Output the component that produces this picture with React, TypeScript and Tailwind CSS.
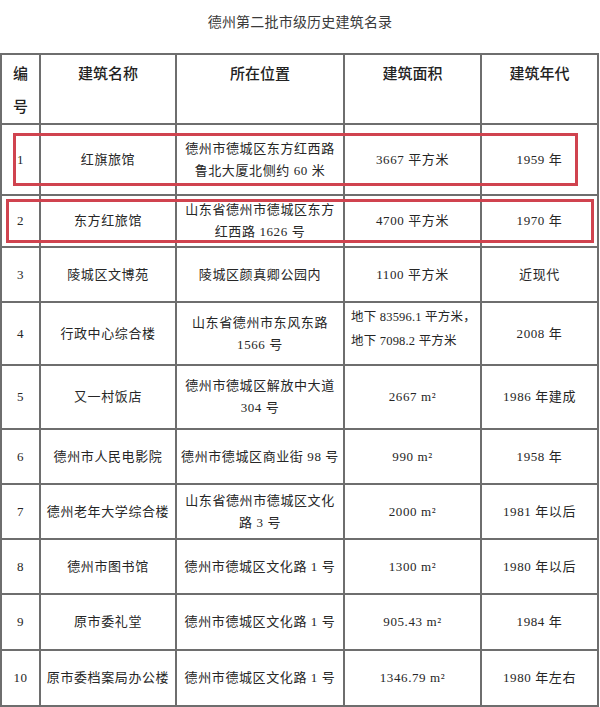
import React from "react";

const body = "font-['Liberation_Serif','Noto_Sans_CJK_SC',serif] text-[13px] leading-[22px] text-[#262626] tracking-[0.6px] whitespace-nowrap";

type Row = { n: string; name: string; loc: string[]; area: string[]; areaLeft?: boolean; year: string };

const rows: Row[] = [
  { n: "1", name: "红旗旅馆", loc: ["德州市德城区东方红西路", "鲁北大厦北侧约 60 米"], area: ["3667 平方米"], year: "1959 年" },
  { n: "2", name: "东方红旅馆", loc: ["山东省德州市德城区东方", "红西路 1626 号"], area: ["4700 平方米"], year: "1970 年" },
  { n: "3", name: "陵城区文博苑", loc: ["陵城区颜真卿公园内"], area: ["1100 平方米"], year: "近现代" },
  { n: "4", name: "行政中心综合楼", loc: ["山东省德州市东风东路", "1566 号"], area: ["地下 83596.1 平方米，", "地下 7098.2 平方米"], areaLeft: true, year: "2008 年" },
  { n: "5", name: "又一村饭店", loc: ["德州市德城区解放中大道", "304 号"], area: ["2667 m²"], year: "1986 年建成" },
  { n: "6", name: "德州市人民电影院", loc: ["德州市德城区商业街 98 号"], area: ["990 m²"], year: "1958 年" },
  { n: "7", name: "德州老年大学综合楼", loc: ["山东省德州市德城区文化", "路 3 号"], area: ["2000 m²"], year: "1981 年以后" },
  { n: "8", name: "德州市图书馆", loc: ["德州市德城区文化路 1 号"], area: ["1300 m²"], year: "1980 年以后" },
  { n: "9", name: "原市委礼堂", loc: ["德州市德城区文化路 1 号"], area: ["905.43 m²"], year: "1984 年" },
  { n: "10", name: "原市委档案局办公楼", loc: ["德州市德城区文化路 1 号"], area: ["1346.79 m²"], year: "1980 年左右" },
];

function Cell({ children, className = "" }: { children: React.ReactNode; className?: string }) {
  return <div className={`bg-white flex flex-col items-center justify-center text-center overflow-hidden ${className}`}>{children}</div>;
}

export default function App() {
  const head = "font-['Noto_Sans_CJK_SC',sans-serif] text-[15px] font-medium text-[#222] leading-[33px] pt-[1px]";
  return (
    <div className="w-[600px] h-[707px] bg-white relative overflow-hidden">
      <div className="h-[53px] flex justify-center pt-[10px]">
        <div className="font-['Noto_Sans_CJK_SC',sans-serif] text-[14px] leading-[22px] text-[#3a3a3a] tracking-[0.2px]">
          德州第二批市级历史建筑名录
        </div>
      </div>
      <div className="bg-[#6e6e6e] p-[2px] w-[599px]">
        <div className="grid grid-cols-[37px_134px_166px_135px_115px] grid-rows-[68px_69px_50px_53px_61px_62px_53px_53px_53px_54px_54px] gap-[2px]">
          <div className={`bg-white flex flex-col items-center ${head}`}>
            <span>编</span>
            <span>号</span>
          </div>
          <div className={`bg-white text-center ${head}`}>建筑名称</div>
          <div className={`bg-white text-center ${head}`}>所在位置</div>
          <div className={`bg-white text-center ${head}`}>建筑面积</div>
          <div className={`bg-white text-center ${head}`}>建筑年代</div>
          {rows.map((r) => (
            <React.Fragment key={r.n}>
              <Cell className={`${body} text-[12px]`}>{r.n}</Cell>
              <Cell className={body}>{r.name}</Cell>
              <Cell className={body}>
                {r.loc.map((l) => (
                  <span key={l}>{l}</span>
                ))}
              </Cell>
              {r.areaLeft ? (
                <div className="bg-white flex flex-col items-start justify-center pl-[6px] pb-[10px] font-['Liberation_Serif','Noto_Sans_CJK_SC',serif] text-[12.5px] leading-[24px] text-[#262626] whitespace-nowrap tracking-[0.2px]">
                  {r.area.map((l) => (
                    <span key={l}>{l}</span>
                  ))}
                </div>
              ) : (
                <Cell className={body}>
                  {r.area.map((l) => (
                    <span key={l}>{l}</span>
                  ))}
                </Cell>
              )}
              <Cell className={body}>{r.year}</Cell>
            </React.Fragment>
          ))}
        </div>
      </div>
      <div className="absolute left-[13px] top-[133px] w-[565px] h-[53px] border-[3px] border-[#d0434f]" />
      <div className="absolute left-[6px] top-[199px] w-[588px] h-[44px] border-[3px] border-[#d0434f]" />
    </div>
  );
}
